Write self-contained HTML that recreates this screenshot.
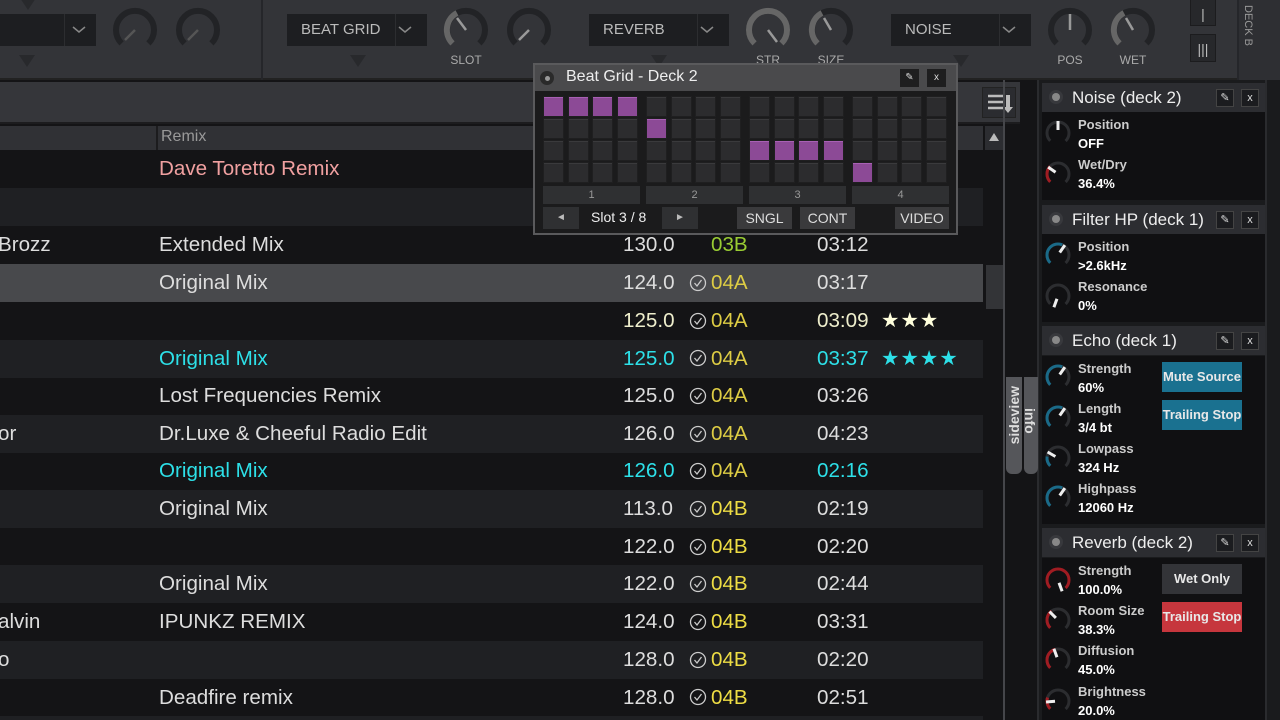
<!DOCTYPE html>
<html><head><meta charset="utf-8"><style>
*{margin:0;padding:0;box-sizing:border-box}
html{width:1280px;height:720px;overflow:hidden}
body{width:1280px;height:720px;overflow:hidden;background:#141416;font-family:"Liberation Sans",sans-serif;position:relative;color:#ddd}
.a{position:absolute}
.top{left:0;top:0;width:1280px;height:80px;background:#333438;border-bottom:2px solid #222}
.dd{background:#1d1e21;height:32px;top:14px;color:#bbb;font-size:15px;line-height:32px;padding-left:14px}
.dd .ch{position:absolute;right:0;top:0;width:32px;height:32px;border-left:1px solid #2c2d30}
.lbl{font-size:12px;color:#aaa;top:53px;width:60px;text-align:center}
.row{left:0;width:983px;height:38px;font-size:20.6px;line-height:38px;color:#ddd}
.row span{position:absolute}
.fxh{left:1042px;width:223px;height:29px;background:#2c2d31;font-size:17px;color:#eee;line-height:29px}
.fxh .t{position:absolute;left:30px}
.fxh .d{position:absolute;left:10px;top:10px;width:8px;height:8px;border-radius:50%;background:#888;box-shadow:0 0 0 3px #38393d}
.fxh .b{position:absolute;top:6px;width:18px;height:18px;background:#1b1c1f;border:1px solid #444;font-size:11px;line-height:16px;text-align:center;color:#ddd}
.fxb{left:1042px;width:223px;background:#101012}
.kl{font-size:13px;font-weight:bold;color:#ccc;line-height:19px}
.kl b{color:#fff;display:block}
.btn{font-size:13px;font-weight:bold;color:#e8e8e8;text-align:center;line-height:30px;width:80px;height:30px}
.cell{position:absolute;width:21px;height:21px;background:#2c2c2e;border:1px solid #1f1f20;box-shadow:inset 0 1px 0 #3a3a3c}
.on{background:#8c4a96;box-shadow:inset 0 1px 0 #a860b4}
.gb{position:absolute;background:#2f3032;color:#ddd;font-size:14px;text-align:center;line-height:22px;height:22px}
</style></head><body>
<div class="a top"></div>
<div class="a" style="left:261px;top:0;width:2px;height:80px;background:#25262a"></div>
<div class="a" style="left:1237px;top:0;width:2px;height:80px;background:#25262a"></div>
<div class="a" style="left:1239px;top:0;width:41px;height:80px;background:#2e2f33"></div>
<div class="a" style="left:1242px;top:5px;font-size:11px;color:#999;writing-mode:vertical-rl">DECK B</div>
<div class="a" style="left:1190px;top:-4px;width:26px;height:30px;background:#27282b;border:1px solid #1c1c1e;color:#bbb;text-align:center;line-height:34px;font-size:14px">|</div>
<div class="a" style="left:1190px;top:34px;width:26px;height:28px;background:#27282b;border:1px solid #1c1c1e;color:#bbb;text-align:center;line-height:28px;font-size:14px">|||</div>
<div class="a dd" style="left:0;width:96px"><span class="ch"></span></div>
<div class="a dd" style="left:287px;width:140px">BEAT GRID<span class="ch"></span></div>
<div class="a dd" style="left:589px;width:140px">REVERB<span class="ch"></span></div>
<div class="a dd" style="left:891px;width:140px">NOISE<span class="ch"></span></div>
<svg class="a" style="left:0;top:0" width="1280" height="80">
<g stroke="#888" stroke-width="1.5" fill="none"><path d="M73 27l6 5 6-5M399 27l6 5 6-5M701 27l6 5 6-5M1003 27l6 5 6-5"/></g>
<g fill="#28292c"><path d="M19 55h16l-8 12zM350 55h16l-8 12zM651 55h16l-8 12zM953 55h16l-8 12zM20 -2h16l-8 12z"/></g>
<g fill="none" stroke-width="6">
<g stroke="#222326">
<path d="M121.6 43.4A19 19 0 1 1 148.4 43.4"/><path d="M184.6 43.4A19 19 0 1 1 211.4 43.4"/>
<path d="M452.6 43.4A19 19 0 1 1 479.4 43.4"/><path d="M515.6 43.4A19 19 0 1 1 542.4 43.4"/>
<path d="M754.6 43.4A19 19 0 1 1 781.4 43.4"/><path d="M817.6 43.4A19 19 0 1 1 844.4 43.4"/>
<path d="M1056.6 43.4A19 19 0 1 1 1083.4 43.4"/><path d="M1119.6 43.4A19 19 0 1 1 1146.4 43.4"/></g>
<g stroke="#666">
<path d="M452.6 43.4A19 19 0 0 1 457 13"/>
<path d="M754.6 43.4A19 19 0 1 1 781.4 43.4"/>
<path d="M817.6 43.4A19 19 0 0 1 822 13"/>
<path d="M1119.6 43.4A19 19 0 0 1 1124 13"/></g></g>
<g stroke="#555" stroke-width="2.5"><path d="M135 30l-10 10M198 30l-10 10"/></g>
<g stroke="#999" stroke-width="2.5"><path d="M466 30l-9-12M529 30l-10 10M768 30l9 12M831 30l-7-12M1070 30v-16M1133 30l-7-12"/></g>
</svg>
<div class="a lbl" style="left:436px">SLOT</div>
<div class="a lbl" style="left:738px">STR</div>
<div class="a lbl" style="left:801px">SIZE</div>
<div class="a lbl" style="left:1040px">POS</div>
<div class="a lbl" style="left:1103px">WET</div>
<div class="a" style="left:0;top:82px;width:1020px;height:42px;background:#35363a;border-bottom:2px solid #1c1c1e"></div>
<div class="a" style="left:982px;top:87px;width:34px;height:31px;background:#2b2c30;border:1px solid #222"></div>
<svg class="a" style="left:982px;top:87px" width="34" height="31"><g stroke="#bbb" stroke-width="2.5"><path d="M6 9h16M6 15h16M6 21h16"/></g><path d="M24 8v12h-3l5 6 5-6h-3V8z" fill="#bbb"/></svg>
<div class="a" style="left:0;top:126px;width:983px;height:24px;background:#303135"></div>
<div class="a" style="left:156px;top:126px;width:2px;height:24px;background:#1c1c1e"></div>
<div class="a" style="left:161px;top:128px;font-size:16px;color:#999">Remix</div>
<div class="a" style="left:985px;top:126px;width:18px;height:24px;background:#2c2d31"></div>
<div class="a" style="left:989px;top:133px;border-left:5px solid transparent;border-right:5px solid transparent;border-bottom:8px solid #bbb"></div>
<div class="a" style="left:986px;top:265px;width:17px;height:44px;background:#333437"></div>
<div class="a" style="left:1003px;top:80px;width:2px;height:640px;background:#45464a"></div>
<div class="a" style="left:1037px;top:80px;width:2px;height:640px;background:#2a2b2e"></div>
<div class="a row" style="top:150px"><span style="left:159px;color:#f0a0a0">Dave Toretto Remix</span></div>
<div class="a row" style="top:188px;background:#1f2023"></div>
<div class="a row" style="top:226px"><span style="left:-2px">Brozz</span><span style="left:159px">Extended Mix</span><span style="left:623px">130.0</span><span style="left:711px;color:#9c3">03B</span><span style="left:817px">03:12</span></div>
<div class="a row" style="top:264px;background:#48494c"><span style="left:159px">Original Mix</span><span style="left:623px">124.0</span><span style="left:711px;color:#dc4">04A</span><span style="left:817px">03:17</span></div>
<div class="a row" style="top:302px;color:#eec"><span style="left:623px">125.0</span><span style="left:711px;color:#dc4">04A</span><span style="left:817px">03:09</span><span style="left:881px;color:#ffd;letter-spacing:1px">★★★</span></div>
<div class="a row" style="top:340px;background:#1f2023;color:#2de0e8"><span style="left:159px">Original Mix</span><span style="left:623px">125.0</span><span style="left:711px;color:#dc4">04A</span><span style="left:817px">03:37</span><span style="left:881px;letter-spacing:1px">★★★★</span></div>
<div class="a row" style="top:377px"><span style="left:159px">Lost Frequencies Remix</span><span style="left:623px">125.0</span><span style="left:711px;color:#dc4">04A</span><span style="left:817px">03:26</span></div>
<div class="a row" style="top:415px;background:#1f2023"><span style="left:-2px">or</span><span style="left:159px">Dr.Luxe &amp; Cheeful Radio Edit</span><span style="left:623px">126.0</span><span style="left:711px;color:#dc4">04A</span><span style="left:817px">04:23</span></div>
<div class="a row" style="top:452px;color:#2de0e8"><span style="left:159px">Original Mix</span><span style="left:623px">126.0</span><span style="left:711px;color:#dc4">04A</span><span style="left:817px">02:16</span></div>
<div class="a row" style="top:490px;background:#1f2023"><span style="left:159px">Original Mix</span><span style="left:623px">113.0</span><span style="left:711px;color:#ed4">04B</span><span style="left:817px">02:19</span></div>
<div class="a row" style="top:528px"><span style="left:623px">122.0</span><span style="left:711px;color:#ed4">04B</span><span style="left:817px">02:20</span></div>
<div class="a row" style="top:565px;background:#1f2023"><span style="left:159px">Original Mix</span><span style="left:623px">122.0</span><span style="left:711px;color:#ed4">04B</span><span style="left:817px">02:44</span></div>
<div class="a row" style="top:603px"><span style="left:-2px">alvin</span><span style="left:159px">IPUNKZ REMIX</span><span style="left:623px">124.0</span><span style="left:711px;color:#ed4">04B</span><span style="left:817px">03:31</span></div>
<div class="a row" style="top:641px;background:#1f2023"><span style="left:-2px">o</span><span style="left:623px">128.0</span><span style="left:711px;color:#ed4">04B</span><span style="left:817px">02:20</span></div>
<div class="a row" style="top:679px"><span style="left:159px">Deadfire remix</span><span style="left:623px">128.0</span><span style="left:711px;color:#ed4">04B</span><span style="left:817px">02:51</span></div>
<div class="a row" style="top:716px;height:4px;background:#1f2023"></div>
<svg class="a" style="left:688px;top:270px" width="20" height="440" fill="none" stroke="#ccc" stroke-width="1.3">
<g id="ck"><circle cx="10" cy="13" r="7.5"/><path d="M6.5 13l2.5 3 4.5-6"/></g>
<use href="#ck" y="38"/><use href="#ck" y="75"/><use href="#ck" y="113"/><use href="#ck" y="151"/><use href="#ck" y="188"/><use href="#ck" y="226"/><use href="#ck" y="264"/><use href="#ck" y="301"/><use href="#ck" y="339"/><use href="#ck" y="377"/><use href="#ck" y="414"/>
</svg>
<div class="a" style="left:1006px;top:377px;width:16px;height:97px;background:#55565a;border-radius:0 0 6px 6px"></div>
<div class="a" style="left:1024px;top:377px;width:14px;height:97px;background:#55565a;border-radius:0 0 6px 6px"></div>
<div class="a" style="left:1006px;top:386px;font-size:14px;font-weight:bold;color:#ddd;writing-mode:vertical-rl;transform:rotate(180deg);width:16px">sideview</div>
<div class="a" style="left:1024px;top:408px;font-size:14px;font-weight:bold;color:#ddd;writing-mode:vertical-rl;width:14px">info</div>
<div class="a" style="left:533px;top:63px;width:425px;height:172px;background:#1b1b1c;border:2px solid #5a5a5c"></div>
<div class="a" style="left:535px;top:65px;width:421px;height:26px;background:#4a4a4c"></div>
<div class="a" style="left:540px;top:71px;width:14px;height:14px;border-radius:50%;background:#2a2a2a"></div>
<div class="a" style="left:545px;top:76px;width:5px;height:5px;border-radius:50%;background:#999"></div>
<div class="a" style="left:566px;top:68px;font-size:16px;color:#eee">Beat Grid - Deck 2</div>
<div class="a" style="left:900px;top:69px;width:19px;height:18px;background:#1e1e1f;color:#ddd;font-size:10px;text-align:center;line-height:18px">&#9998;</div>
<div class="a" style="left:927px;top:69px;width:19px;height:18px;background:#1e1e1f;color:#ddd;font-size:10px;text-align:center;line-height:18px">x</div>
<div class="a" style="left:541px;top:94px;width:410px;height:92px">
<div class="cell on" style="left:2px;top:2px"></div><div class="cell" style="left:2px;top:24px"></div><div class="cell" style="left:2px;top:46px"></div><div class="cell" style="left:2px;top:68px"></div>
<div class="cell on" style="left:27px;top:2px"></div><div class="cell" style="left:27px;top:24px"></div><div class="cell" style="left:27px;top:46px"></div><div class="cell" style="left:27px;top:68px"></div>
<div class="cell on" style="left:51px;top:2px"></div><div class="cell" style="left:51px;top:24px"></div><div class="cell" style="left:51px;top:46px"></div><div class="cell" style="left:51px;top:68px"></div>
<div class="cell on" style="left:76px;top:2px"></div><div class="cell" style="left:76px;top:24px"></div><div class="cell" style="left:76px;top:46px"></div><div class="cell" style="left:76px;top:68px"></div>
<div class="cell" style="left:105px;top:2px"></div><div class="cell on" style="left:105px;top:24px"></div><div class="cell" style="left:105px;top:46px"></div><div class="cell" style="left:105px;top:68px"></div>
<div class="cell" style="left:130px;top:2px"></div><div class="cell" style="left:130px;top:24px"></div><div class="cell" style="left:130px;top:46px"></div><div class="cell" style="left:130px;top:68px"></div>
<div class="cell" style="left:154px;top:2px"></div><div class="cell" style="left:154px;top:24px"></div><div class="cell" style="left:154px;top:46px"></div><div class="cell" style="left:154px;top:68px"></div>
<div class="cell" style="left:179px;top:2px"></div><div class="cell" style="left:179px;top:24px"></div><div class="cell" style="left:179px;top:46px"></div><div class="cell" style="left:179px;top:68px"></div>
<div class="cell" style="left:208px;top:2px"></div><div class="cell" style="left:208px;top:24px"></div><div class="cell on" style="left:208px;top:46px"></div><div class="cell" style="left:208px;top:68px"></div>
<div class="cell" style="left:233px;top:2px"></div><div class="cell" style="left:233px;top:24px"></div><div class="cell on" style="left:233px;top:46px"></div><div class="cell" style="left:233px;top:68px"></div>
<div class="cell" style="left:257px;top:2px"></div><div class="cell" style="left:257px;top:24px"></div><div class="cell on" style="left:257px;top:46px"></div><div class="cell" style="left:257px;top:68px"></div>
<div class="cell" style="left:282px;top:2px"></div><div class="cell" style="left:282px;top:24px"></div><div class="cell on" style="left:282px;top:46px"></div><div class="cell" style="left:282px;top:68px"></div>
<div class="cell" style="left:311px;top:2px"></div><div class="cell" style="left:311px;top:24px"></div><div class="cell" style="left:311px;top:46px"></div><div class="cell on" style="left:311px;top:68px"></div>
<div class="cell" style="left:336px;top:2px"></div><div class="cell" style="left:336px;top:24px"></div><div class="cell" style="left:336px;top:46px"></div><div class="cell" style="left:336px;top:68px"></div>
<div class="cell" style="left:360px;top:2px"></div><div class="cell" style="left:360px;top:24px"></div><div class="cell" style="left:360px;top:46px"></div><div class="cell" style="left:360px;top:68px"></div>
<div class="cell" style="left:385px;top:2px"></div><div class="cell" style="left:385px;top:24px"></div><div class="cell" style="left:385px;top:46px"></div><div class="cell" style="left:385px;top:68px"></div>
</div>
<div class="gb" style="left:543px;top:186px;width:97px;height:18px;line-height:18px;font-size:11px;color:#999">1</div>
<div class="gb" style="left:646px;top:186px;width:97px;height:18px;line-height:18px;font-size:11px;color:#999">2</div>
<div class="gb" style="left:749px;top:186px;width:97px;height:18px;line-height:18px;font-size:11px;color:#999">3</div>
<div class="gb" style="left:852px;top:186px;width:97px;height:18px;line-height:18px;font-size:11px;color:#999">4</div>
<div class="gb" style="left:543px;top:207px;width:36px;font-size:10px;color:#bbb">◄</div>
<div class="a" style="left:591px;top:209px;font-size:14px;color:#eee">Slot 3 / 8</div>
<div class="gb" style="left:662px;top:207px;width:36px;font-size:10px;color:#bbb">►</div>
<div class="gb" style="left:737px;top:207px;width:55px;background:#3a3a3c">SNGL</div>
<div class="gb" style="left:800px;top:207px;width:55px;background:#3a3a3c">CONT</div>
<div class="gb" style="left:895px;top:207px;width:54px;background:#3a3a3c">VIDEO</div>
<div class="a" style="left:1039px;top:80px;width:241px;height:640px;background:#1a1b1d"></div>
<div class="a" style="left:1265px;top:80px;width:2px;height:640px;background:#2a2b2e"></div>
<div class="a fxh" style="top:83px"><span class="d"></span><span class="t">Noise (deck 2)</span><span class="b" style="left:174px">&#9998;</span><span class="b" style="left:199px">x</span></div>
<div class="a fxb" style="top:112px;height:88px"></div>
<div class="a fxh" style="top:205px"><span class="d"></span><span class="t">Filter HP (deck 1)</span><span class="b" style="left:174px">&#9998;</span><span class="b" style="left:199px">x</span></div>
<div class="a fxb" style="top:234px;height:88px"></div>
<div class="a fxh" style="top:326px"><span class="d"></span><span class="t">Echo (deck 1)</span><span class="b" style="left:174px">&#9998;</span><span class="b" style="left:199px">x</span></div>
<div class="a fxb" style="top:356px;height:168px"></div>
<div class="a fxh" style="top:528px"><span class="d"></span><span class="t">Reverb (deck 2)</span><span class="b" style="left:174px">&#9998;</span><span class="b" style="left:199px">x</span></div>
<div class="a fxb" style="top:558px;height:162px"></div>
<svg class="a" style="left:1040px;top:0" width="40" height="720" fill="none">
<defs><circle id="bg" r="11" stroke="#2c2d30" stroke-width="3" stroke-dasharray="51.8 100" transform="rotate(135)"/></defs>
<g transform="translate(18,133)"><use href="#bg"/><line y1="-3" y2="-12" stroke="#eee" stroke-width="3"/></g>
<g transform="translate(18,174)"><use href="#bg"/><circle r="11" stroke="#a01c22" stroke-width="3" stroke-dasharray="17 100" transform="rotate(135)"/><line y1="-3" y2="-12" stroke="#eee" stroke-width="3" transform="rotate(-55)"/></g>
<g transform="translate(18,255)"><use href="#bg"/><circle r="11" stroke="#1a6a88" stroke-width="3" stroke-dasharray="30 100" transform="rotate(135)"/><line y1="-3" y2="-12" stroke="#eee" stroke-width="3" transform="rotate(35)"/></g>
<g transform="translate(18,296)"><use href="#bg"/><line y1="-3" y2="-12" stroke="#eee" stroke-width="3" transform="rotate(-160)"/></g>
<g transform="translate(18,377)"><use href="#bg"/><circle r="11" stroke="#1a6a88" stroke-width="3" stroke-dasharray="30 100" transform="rotate(135)"/><line y1="-3" y2="-12" stroke="#eee" stroke-width="3" transform="rotate(35)"/></g>
<g transform="translate(18,418)"><use href="#bg"/><circle r="11" stroke="#1a6a88" stroke-width="3" stroke-dasharray="30 100" transform="rotate(135)"/><line y1="-3" y2="-12" stroke="#eee" stroke-width="3" transform="rotate(35)"/></g>
<g transform="translate(18,458)"><use href="#bg"/><circle r="11" stroke="#1a6a88" stroke-width="3" stroke-dasharray="10 100" transform="rotate(135)"/><line y1="-3" y2="-12" stroke="#eee" stroke-width="3" transform="rotate(-60)"/></g>
<g transform="translate(18,498)"><use href="#bg"/><circle r="11" stroke="#1a6a88" stroke-width="3" stroke-dasharray="30 100" transform="rotate(135)"/><line y1="-3" y2="-12" stroke="#eee" stroke-width="3" transform="rotate(35)"/></g>
<g transform="translate(18,580)"><circle r="11" stroke="#a01c22" stroke-width="3" stroke-dasharray="51.8 100" transform="rotate(135)"/><line y1="-3" y2="-12" stroke="#eee" stroke-width="3" transform="rotate(160)"/></g>
<g transform="translate(18,620)"><use href="#bg"/><circle r="11" stroke="#a01c22" stroke-width="3" stroke-dasharray="19 100" transform="rotate(135)"/><line y1="-3" y2="-12" stroke="#eee" stroke-width="3" transform="rotate(-45)"/></g>
<g transform="translate(18,660)"><use href="#bg"/><circle r="11" stroke="#a01c22" stroke-width="3" stroke-dasharray="23 100" transform="rotate(135)"/><line y1="-3" y2="-12" stroke="#eee" stroke-width="3" transform="rotate(-20)"/></g>
<g transform="translate(18,701)"><use href="#bg"/><circle r="11" stroke="#a01c22" stroke-width="3" stroke-dasharray="12 100" transform="rotate(135)"/><line y1="-3" y2="-12" stroke="#eee" stroke-width="3" transform="rotate(-95)"/></g>
</svg>
<div class="a kl" style="left:1078px;top:115px">Position<b>OFF</b></div>
<div class="a kl" style="left:1078px;top:155px">Wet/Dry<b>36.4%</b></div>
<div class="a kl" style="left:1078px;top:237px">Position<b>&gt;2.6kHz</b></div>
<div class="a kl" style="left:1078px;top:277px">Resonance<b>0%</b></div>
<div class="a kl" style="left:1078px;top:359px">Strength<b>60%</b></div>
<div class="a kl" style="left:1078px;top:399px">Length<b>3/4 bt</b></div>
<div class="a kl" style="left:1078px;top:439px">Lowpass<b>324 Hz</b></div>
<div class="a kl" style="left:1078px;top:479px">Highpass<b>12060 Hz</b></div>
<div class="a kl" style="left:1078px;top:561px">Strength<b>100.0%</b></div>
<div class="a kl" style="left:1078px;top:601px">Room Size<b>38.3%</b></div>
<div class="a kl" style="left:1078px;top:641px">Diffusion<b>45.0%</b></div>
<div class="a kl" style="left:1078px;top:682px">Brightness<b>20.0%</b></div>
<div class="a btn" style="left:1162px;top:362px;background:#1a7190">Mute Source</div>
<div class="a btn" style="left:1162px;top:400px;background:#1a7190">Trailing Stop</div>
<div class="a btn" style="left:1162px;top:564px;background:#333438">Wet Only</div>
<div class="a btn" style="left:1162px;top:602px;background:#c6363d">Trailing Stop</div>
</body></html>
